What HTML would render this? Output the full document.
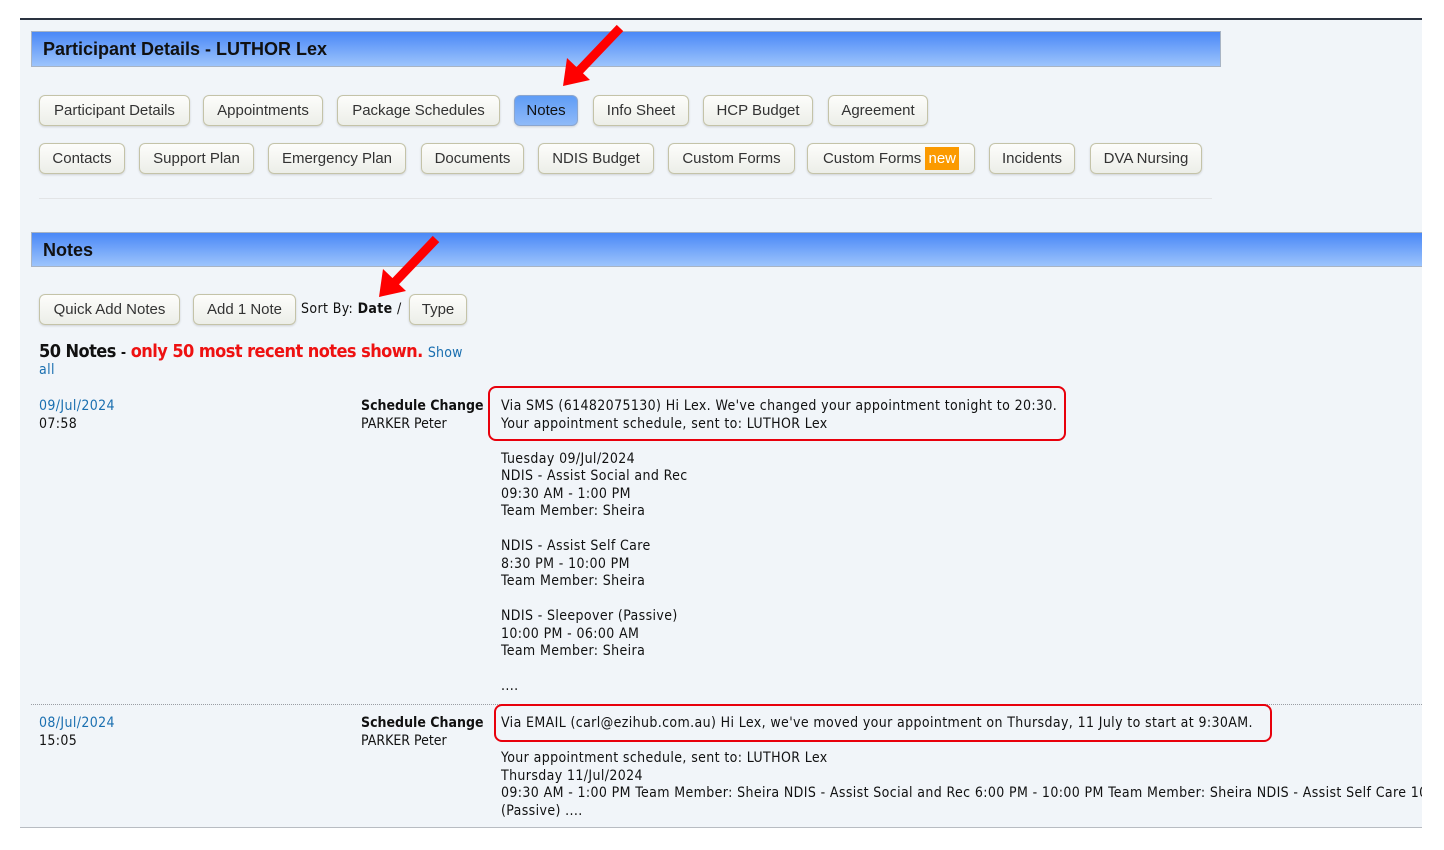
<!DOCTYPE html>
<html><head><meta charset="utf-8">
<style>
*{margin:0;padding:0;box-sizing:border-box}
body{width:1444px;height:850px;background:#fff;position:relative;overflow:hidden;font-family:"Liberation Sans",Arial,sans-serif}
#pg{position:absolute;left:20px;top:18px;width:1402px;height:810px;background:#f1f5f9;border-top:2px solid #2a3240;border-bottom:1px solid #b8bcc2;overflow:hidden}
.bar{position:absolute;background:linear-gradient(#4a88f7,#9dc4fc);border:1px solid #a8b4c4;font-weight:bold;font-size:18px;color:#111;padding-left:11px;line-height:34px}
.b{position:absolute;height:31px;border:1px solid #c4c3a8;border-radius:6px;background:linear-gradient(#fdfdfb,#eceee8);box-shadow:0 1px 2px rgba(0,0,0,.15);font-size:15px;color:#333;text-align:center;line-height:30px;white-space:nowrap}
.b.on{background:linear-gradient(#5f9cf6,#8fbaf8);border-color:#8ba6cf;color:#111}
.t{position:absolute;font-family:"DejaVu Sans Condensed","DejaVu Sans",sans-serif;font-size:14px;line-height:17.5px;color:#111;white-space:nowrap;letter-spacing:.38px}
.lnk{color:#1a6fb0}
.box{position:absolute;border:2.5px solid #e8000c;border-radius:8px}
</style></head><body>
<div id="pg"></div>
<div class="bar" style="left:31px;top:31px;width:1190px;height:36px">Participant Details - LUTHOR Lex</div>

<div class="b" style="left:39px;top:95px;width:151px">Participant Details</div>
<div class="b" style="left:203px;top:95px;width:120px">Appointments</div>
<div class="b" style="left:337px;top:95px;width:163px">Package Schedules</div>
<div class="b on" style="left:514px;top:95px;width:64px">Notes</div>
<div class="b" style="left:593px;top:95px;width:96px">Info Sheet</div>
<div class="b" style="left:703px;top:95px;width:110px">HCP Budget</div>
<div class="b" style="left:828px;top:95px;width:100px">Agreement</div>

<div class="b" style="left:39px;top:143px;width:86px">Contacts</div>
<div class="b" style="left:139px;top:143px;width:115px">Support Plan</div>
<div class="b" style="left:268px;top:143px;width:138px">Emergency Plan</div>
<div class="b" style="left:421px;top:143px;width:103px">Documents</div>
<div class="b" style="left:538px;top:143px;width:116px">NDIS Budget</div>
<div class="b" style="left:668px;top:143px;width:127px">Custom Forms</div>
<div class="b" style="left:807px;top:143px;width:168px">Custom Forms <span style="background:#fb9a00;color:#fff;padding:3px 3px">new</span></div>
<div class="b" style="left:989px;top:143px;width:86px">Incidents</div>
<div class="b" style="left:1090px;top:143px;width:112px">DVA Nursing</div>

<div style="position:absolute;left:39px;top:198px;width:1173px;height:1px;background:#e2e4e6"></div>

<div class="bar" style="left:31px;top:232px;width:1391px;height:35px;border-right:none">Notes</div>

<div class="b" style="left:39px;top:294px;width:141px">Quick Add Notes</div>
<div class="b" style="left:193px;top:294px;width:103px">Add 1 Note</div>
<div class="t" style="left:301px;top:301px">Sort By: <b>Date</b> /</div>
<div class="b" style="left:409px;top:294px;width:58px">Type</div>

<div class="t" style="left:39px;top:342px;font-size:18px;line-height:20px;font-weight:bold;letter-spacing:-.55px">50 Notes <span style="font-size:14px">-</span> <span style="color:#ee1111">only 50 most recent notes shown.</span> <span class="lnk" style="font-size:14px;font-weight:normal;letter-spacing:.2px">Show</span></div>
<div class="t lnk" style="left:39px;top:362px">all</div>

<div class="t" style="left:39px;top:398px"><span class="lnk">09/Jul/2024</span><br>07:58</div>
<div class="t" style="left:361px;top:398px;letter-spacing:0"><b>Schedule Change</b><br>PARKER Peter</div>
<div class="box" style="left:488px;top:386px;width:578px;height:55px"></div>
<div class="t" style="left:501px;top:398px">Via SMS (61482075130) Hi Lex. We've changed your appointment tonight to 20:30.<br>Your appointment schedule, sent to: LUTHOR Lex<br><br>Tuesday 09/Jul/2024<br>NDIS - Assist Social and Rec<br>09:30 AM - 1:00 PM<br>Team Member: Sheira<br><br>NDIS - Assist Self Care<br>8:30 PM - 10:00 PM<br>Team Member: Sheira<br><br>NDIS - Sleepover (Passive)<br>10:00 PM - 06:00 AM<br>Team Member: Sheira<br><br>....</div>

<div style="position:absolute;left:31px;top:704px;width:1391px;border-top:1px dotted #9a9ea4"></div>

<div class="t" style="left:39px;top:715px"><span class="lnk">08/Jul/2024</span><br>15:05</div>
<div class="t" style="left:361px;top:715px;letter-spacing:0"><b>Schedule Change</b><br>PARKER Peter</div>
<div class="box" style="left:494px;top:704px;width:778px;height:38px"></div>
<div class="t" style="left:501px;top:715px">Via EMAIL (carl@ezihub.com.au) Hi Lex, we've moved your appointment on Thursday, 11 July to start at 9:30AM.<br><br>Your appointment schedule, sent to: LUTHOR Lex<br>Thursday 11/Jul/2024<br>09:30 AM - 1:00 PM Team Member: Sheira NDIS - Assist Social and Rec 6:00 PM - 10:00 PM Team Member: Sheira NDIS - Assist Self Care 10:00 PM<br>(Passive) ....</div>
<div style="position:absolute;left:1422px;top:0;width:22px;height:850px;background:#fff"></div>
<div style="position:absolute;left:0;top:828px;width:1444px;height:22px;background:#fff"></div>

<svg style="position:absolute;left:0;top:0" width="1444" height="850">
<g stroke="#f00" stroke-width="9" fill="none"><line x1="620" y1="28" x2="578" y2="72"/><line x1="436" y1="239" x2="394" y2="283"/></g>
<polygon points="563,86 567,58 590,80" fill="#f00"/>
<polygon points="379,297 383,269 406,291" fill="#f00"/>
</svg>
</body></html>
